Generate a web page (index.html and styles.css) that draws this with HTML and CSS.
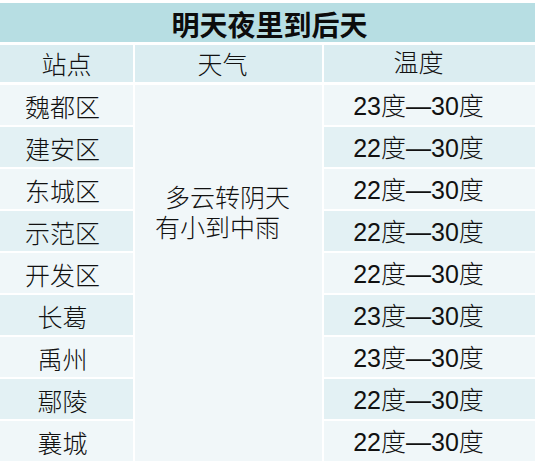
FILE: index.html
```html
<!DOCTYPE html>
<html lang="zh-CN">
<head>
<meta charset="utf-8">
<title>明天夜里到后天</title>
<link rel="stylesheet" href="styles.css">
</head>
<body>
<div class="sheet">
  <div class="title">明天夜里到后天</div>
  <div class="grid">
    <div class="cell head">站点</div>
    <div class="cell head c2">天气</div>
    <div class="cell head c3">温度</div>

    <div class="cell light r1 c1">魏都区</div>
    <div class="cell weather">
      <p class="forecast">多云转阴天<br>有小到中雨</p>
    </div>
    <div class="cell light r1 c3">23度—30度</div>

    <div class="cell dark r2 c1">建安区</div>
    <div class="cell dark r2 c3">22度—30度</div>
    <div class="cell light r3 c1">东城区</div>
    <div class="cell light r3 c3">22度—30度</div>
    <div class="cell dark r4 c1">示范区</div>
    <div class="cell dark r4 c3">22度—30度</div>
    <div class="cell light r5 c1">开发区</div>
    <div class="cell light r5 c3">22度—30度</div>
    <div class="cell dark r6 c1">长葛</div>
    <div class="cell dark r6 c3">23度—30度</div>
    <div class="cell light r7 c1">禹州</div>
    <div class="cell light r7 c3">23度—30度</div>
    <div class="cell dark r8 c1">鄢陵</div>
    <div class="cell dark r8 c3">22度—30度</div>
    <div class="cell light r9 c1">襄城</div>
    <div class="cell light r9 c3">22度—30度</div>
  </div>
</div>
</body>
</html>
```

FILE: styles.css
```css
html, body {
  margin: 0;
  padding: 0;
  background: #ffffff;
}

body {
  font-family: "Liberation Sans", "Noto Sans CJK SC", sans-serif;
  color: #111111;
}

.sheet {
  width: 535px;
  padding-top: 3px;
}

.title {
  height: 39px;
  margin-bottom: 3px;
  background: #b7dee3;
  font-family: "Noto Sans CJK SC", sans-serif;
  font-weight: bold;
  font-size: 28px;
  line-height: 42px;
  text-align: center;
  color: #0c0c0c;
  padding-left: 4px;
}

.grid {
  display: grid;
  grid-template-columns: 133px 187px 1fr;
  grid-template-rows: 38px repeat(9, 40px);
  column-gap: 2px;
  row-gap: 2px;
}

.cell {
  display: flex;
  align-items: center;
  justify-content: center;
  font-size: 25px;
  font-weight: 300;
  font-family: "Noto Sans CJK SC", sans-serif;
  line-height: 1;
  padding-top: 3px;
}

.head {
  background: #dbedf1;
  grid-row: 1;
  margin-bottom: 1px;
  padding-top: 0;
}

.head.c2 {
  padding-right: 12px;
}

.c1 {
  grid-column: 1;
  padding-right: 8px;
}

.c3 {
  grid-column: 3;
  padding-right: 22px;
  font-family: "Liberation Sans", "Noto Sans CJK SC", sans-serif;
}

.light { background: #f0f7f9; }
.dark { background: #e3f1f4; }

.r1 { grid-row: 2; }
.r2 { grid-row: 3; }
.r3 { grid-row: 4; }
.r4 { grid-row: 5; }
.r5 { grid-row: 6; }
.r6 { grid-row: 7; }
.r7 { grid-row: 8; }
.r8 { grid-row: 9; }
.r9 { grid-row: 10; }

.weather {
  grid-column: 2;
  grid-row: 2 / span 9;
  background: #f1f7f9;
  align-items: flex-start;
  justify-content: flex-start;
  padding-top: 96px;
  padding-left: 20px;
}

.forecast {
  margin: 0;
  line-height: 30px;
  text-indent: 10px;
}
```
